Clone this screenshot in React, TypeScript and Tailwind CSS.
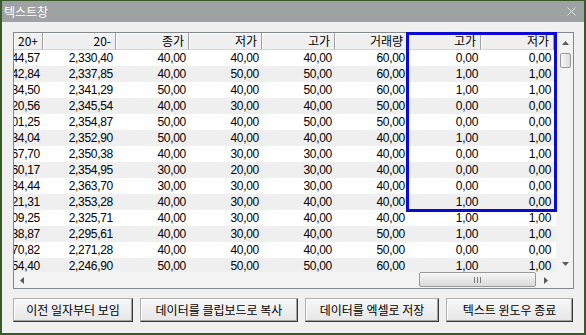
import React from "react";

const headers = ["20+", "20-", "종가", "저가", "고가", "거래량", "고가", "저가"];
const widths = [29, 73, 73, 73, 73, 73, 73, 73];

const rows: string[][] = [
  ["2,344,57", "2,330,40", "40,00", "40,00", "40,00", "60,00", "0,00", "0,00"],
  ["2,342,84", "2,337,85", "40,00", "50,00", "50,00", "60,00", "1,00", "1,00"],
  ["2,334,50", "2,341,29", "50,00", "40,00", "50,00", "60,00", "1,00", "1,00"],
  ["2,320,56", "2,345,54", "40,00", "30,00", "40,00", "50,00", "0,00", "0,00"],
  ["2,301,25", "2,354,87", "50,00", "40,00", "50,00", "50,00", "0,00", "0,00"],
  ["2,334,04", "2,352,90", "50,00", "40,00", "40,00", "40,00", "1,00", "1,00"],
  ["2,367,70", "2,350,38", "40,00", "30,00", "30,00", "40,00", "0,00", "1,00"],
  ["2,360,17", "2,354,95", "30,00", "20,00", "30,00", "40,00", "0,00", "0,00"],
  ["2,334,44", "2,363,70", "30,00", "30,00", "30,00", "40,00", "0,00", "0,00"],
  ["2,321,31", "2,353,28", "40,00", "30,00", "40,00", "40,00", "1,00", "0,00"],
  ["2,309,25", "2,325,71", "40,00", "30,00", "40,00", "40,00", "1,00", "1,00"],
  ["2,338,87", "2,295,61", "40,00", "30,00", "40,00", "50,00", "1,00", "1,00"],
  ["2,370,82", "2,271,28", "40,00", "40,00", "40,00", "50,00", "0,00", "0,00"],
  ["2,354,40", "2,246,90", "50,00", "50,00", "50,00", "60,00", "1,00", "1,00"],
];

const Tri = ({ dir }: { dir: "up" | "down" | "left" | "right" }) => {
  const pts =
    dir === "up"
      ? "0,4 7,4 3.5,0"
      : dir === "down"
      ? "0,0 7,0 3.5,4"
      : dir === "left"
      ? "4,0 4,7 0,3.5"
      : "0,0 0,7 4,3.5";
  const w = dir === "up" || dir === "down" ? 7 : 4;
  const h = dir === "up" || dir === "down" ? 4 : 7;
  return (
    <svg width={w} height={h} viewBox={`0 0 ${w} ${h}`}>
      <polygon points={pts} fill="#5a5a5a" />
    </svg>
  );
};

const buttons = [
  { label: "이전 일자부터 보임", w: "w-[120px]" },
  { label: "데이터를 클립보드로 복사", w: "w-[158px]" },
  { label: "데이터를 엑셀로 저장", w: "w-[134px]" },
  { label: "텍스트 윈도우 종료", w: "w-[127px]" },
];

export default function App() {
  return (
    <div className="relative w-[586px] h-[335px] bg-[#f0f0f0] border-t border-x-2 border-b-2 border-[#3b5a2b] flex flex-col font-['Noto_Sans_CJK_KR',sans-serif] text-black overflow-hidden">
      {/* title bar */}
      <div className="h-[21px] shrink-0 bg-[#9fa2a2] flex items-center justify-between pl-[2px] pr-[8px]">
        <span className="text-white text-[12px] leading-none">텍스트창</span>
        <svg width="9" height="9" viewBox="0 0 9 9">
          <path d="M0.5 0.5 L8.5 8.5 M8.5 0.5 L0.5 8.5" stroke="#e6e6e6" strokeWidth="1" />
        </svg>
      </div>

      {/* body */}
      <div className="flex-1 flex flex-col pt-[10px] pl-[11px]">
        {/* list */}
        <div className="w-[561px] h-[257px] border border-[#828790] bg-white flex flex-col">
          <div className="flex h-[239px]">
            <div className="w-[542px] overflow-hidden flex flex-col">
              {/* header */}
              <div className="h-[17px] shrink-0 flex bg-[#f0f0f0]">
                {headers.map((h, i) => (
                  <div
                    key={i}
                    style={{ width: widths[i] }}
                    className="shrink-0 h-full flex items-center justify-end pr-[4px] border-r border-[#a0a0a0] border-b border-b-[#d5d5d5] shadow-[inset_1px_1px_0_#ffffff] text-[12px] leading-none"
                  >
                    {h}
                  </div>
                ))}
                <div className="flex-1 shadow-[inset_1px_1px_0_#ffffff]" />
              </div>
              {/* rows */}
              <div className="flex-1 overflow-hidden font-['Liberation_Sans',sans-serif] text-[12px] tracking-[-0.3px]">
                {rows.map((r, ri) => (
                  <div
                    key={ri}
                    className={`h-[16px] flex ${ri % 2 === 1 ? "bg-[#efefef]" : "bg-white"}`}
                  >
                    {r.map((v, ci) => (
                      <div
                        key={ci}
                        style={{ width: widths[ci] }}
                        className="shrink-0 h-full flex items-center justify-end overflow-hidden pr-[3px] leading-none"
                      >
                        <span className="shrink-0 whitespace-nowrap">{v}</span>
                      </div>
                    ))}
                  </div>
                ))}
              </div>
            </div>
            {/* vertical scrollbar */}
            <div className="w-[17px] bg-[#f3f3f3] flex flex-col">
              <div className="h-[19px] flex items-center justify-center pl-[2px]">
                <Tri dir="up" />
              </div>
              <div className="ml-[4px] mt-[1px] w-[11px] h-[15px] rounded-[2px] border border-[#9a9a9a] bg-gradient-to-r from-[#f6f6f6] to-[#dcdcdc]" />
              <div className="flex-1" />
              <div className="h-[17px] flex items-center justify-center pl-[2px]">
                <Tri dir="down" />
              </div>
            </div>
          </div>
          {/* horizontal scrollbar */}
          <div className="h-[16px] flex bg-[#f3f3f3]">
            <div className="w-[16px] h-full flex items-center justify-center">
              <Tri dir="left" />
            </div>
            <div className="w-[389px]" />
            <div className="w-[117px] h-[15px] rounded-[2px] border border-[#9a9a9a] bg-gradient-to-b from-[#f6f6f6] to-[#dadada] flex items-center justify-center gap-[2px]">
              <div className="w-px h-[6px] bg-[#7a7a7a]" />
              <div className="w-px h-[6px] bg-[#7a7a7a]" />
              <div className="w-px h-[6px] bg-[#7a7a7a]" />
            </div>
            <div className="w-[20px] h-full flex items-center justify-center">
              <Tri dir="right" />
            </div>
            <div className="flex-1" />
          </div>
        </div>

        {/* buttons */}
        <div className="mt-[9px] flex gap-[7px]">
          {buttons.map((b) => (
            <button
              key={b.label}
              className={`${b.w} h-[24px] flex items-center justify-center text-[12px] leading-none bg-gradient-to-b from-[#f7f7f7] to-[#e6e6e6] border border-t-[#b0b0b0] border-l-[#b0b0b0] border-r-[#3a3a3a] border-b-[#3a3a3a] shadow-[inset_-1px_-1px_0_#a0a0a0,inset_1px_1px_0_#ffffff]`}
            >
              {b.label}
            </button>
          ))}
        </div>
      </div>

      {/* blue annotation box */}
      <div className="absolute left-[404px] top-[31px] w-[151px] h-[180px] border-[3px] border-[#0a0ad0] pointer-events-none" />
    </div>
  );
}
